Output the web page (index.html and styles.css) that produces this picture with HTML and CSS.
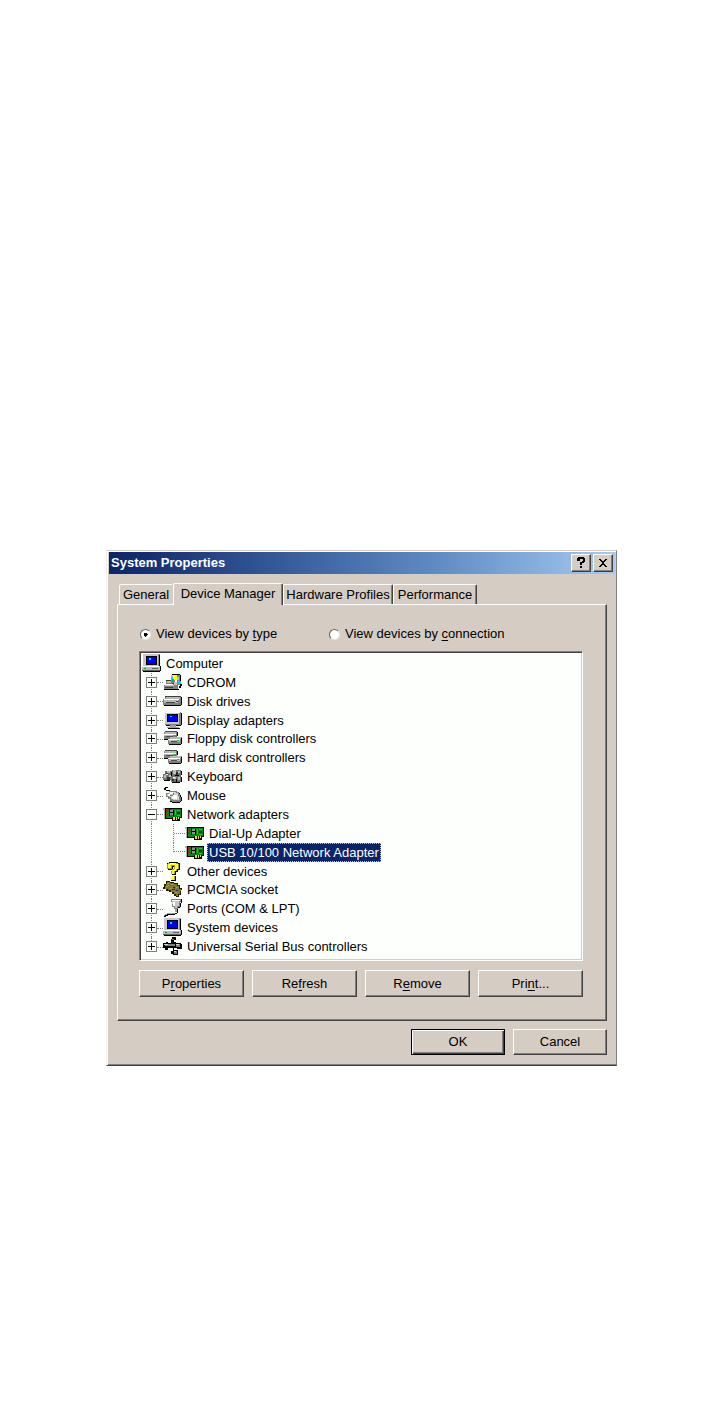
FILE: index.html
```html
<!DOCTYPE html>
<html lang="en">
<head>
    <meta charset="UTF-8">
    <meta name="viewport" content="width=device-width, initial-scale=1.0">
    <title>System Properties</title>
    <link rel="stylesheet" href="styles.css">
</head>
<body>
    <!-- icon set, one symbol per device class -->
    <svg class="sprites" aria-hidden="true">
        <symbol id="computer" viewBox="0 0 20 19">
            <path fill="#909090" d="M1 0h17v13H1z"/>
            <path fill="#c8c8c8" d="M1 0h15v12H1z"/>
            <path fill="#000" d="M17 1h1v12h-1zM4 2h11v9H4z"/>
            <path fill="#0000f0" d="M5 3h9v7H5z"/>
            <path fill="#00e0ff" d="M7 4h2v2H7z"/>
            <path fill="#b8b8b8" d="M0 12h18v5H0z"/>
            <path fill="#fff" d="M0 12h17v1H0z"/>
            <path fill="#00b000" d="M2 14h2v1H2z"/>
            <path fill="#606060" d="M10 14h6v1h-6zM0 16h18v1H0z"/>
            <path fill="#000" d="M18 12h1v5h-1zM1 17h17v1H1z"/>
        </symbol>
        <symbol id="cdrom" viewBox="0 0 20 19">
            <path fill="#808080" d="M8 2h9v10H8zM3 8h5v3H3zM1 11h14v5H1z"/>
            <path fill="#c0c0c0" d="M8 2h3v3H8zM4 8h4v2H4zM13 4h3v3h-3z"/>
            <path fill="#ffff00" d="M10 2h4v5h-4z"/>
            <path fill="#00d8e0" d="M15 8h3v3h-3zM8 4h2v3H8z"/>
            <path fill="#00c040" d="M9 6h2v3H9z"/>
            <path fill="#fff" d="M12 7h2v2h-2zM1 11h9v1H1z"/>
            <path fill="#c8c8c8" d="M11 9h3v3h-3zM2 12h9v1H2z"/>
            <path fill="#404040" d="M2 14h8v1H2zM9 10h2v1H9zM3 7h5v1H3z"/>
            <path fill="#000" d="M1 16h15v1H1zM16 13h2v2h-2zM17 2h1v6h-1zM17 11h2v2h-2zM9 1h8v1H9z"/>
        </symbol>
        <symbol id="disk" viewBox="0 0 20 19">
            <path fill="#808080" d="M2 5h16v2H2zM0 7h18v6H0z"/>
            <path fill="#b8b8b8" d="M3 5h14v2H3zM1 8h14v3H1z"/>
            <path fill="#fff" d="M1 7h15v1H1z"/>
            <path fill="#404040" d="M3 10h9v1H3zM2 4h16v1H2z"/>
            <path fill="#f00000" d="M13 9h2v1h-2z"/>
            <path fill="#000" d="M18 5h1v8h-1zM1 13h17v1H1z"/>
        </symbol>
        <symbol id="display" viewBox="0 0 20 19">
            <path fill="#808080" d="M2 1h16v13H2z"/>
            <path fill="#c8c8c8" d="M2 1h14v12H2z"/>
            <path fill="#000" d="M18 2h1v12h-1zM4 3h11v8H4zM3 14h15v1H3z"/>
            <path fill="#0000f0" d="M5 4h9v6H5z"/>
            <path fill="#00e0ff" d="M7 5h2v1H7z"/>
            <path fill="#fff" d="M2 1h15v1H2z"/>
            <path fill="#a0a0a0" d="M7 14h6v2H7zM4 16h12v1H4z"/>
            <path fill="#000" d="M5 17h12v1H5z"/>
        </symbol>
        <symbol id="drives" viewBox="0 0 20 19">
            <path fill="#808080" d="M1 3h13v7H1zM5 8h14v7H5z"/>
            <path fill="#b8b8b8" d="M2 3h11v2H2zM1 6h11v1H1zM7 8h11v2H7zM6 11h11v2H6z"/>
            <path fill="#fff" d="M1 5h12v1H1zM5 10h12v1H5z"/>
            <path fill="#505050" d="M3 7h7v1H3zM8 12h6v1H8zM2 2h12v1H2z"/>
            <path fill="#00d000" d="M10 6h2v1h-2zM14 11h2v1h-2z"/>
            <path fill="#000" d="M14 3h1v4h-1zM18 9h1v6h-1zM6 15h12v1H6zM1 10h4v1H1z"/>
        </symbol>
        <symbol id="keyboard" viewBox="0 0 20 19">
            <path fill="#707070" d="M2 4h7v4H2zM0 7h9v6H0zM9 3h9v6H9zM8 9h10v6H8z"/>
            <path fill="#c0c0c0" d="M4 4h3v2H4zM1 8h2v3H1zM6 8h2v2H6zM10 3h3v4h-3zM15 4h2v2h-2zM10 10h3v2h-3zM15 10h2v3h-2z"/>
            <path fill="#fff" d="M10 2h5v1h-5zM3 7h2v1H3zM10 10h2v1h-2z"/>
            <path fill="#303030" d="M4 10h3v3H4zM13 5h2v3h-2zM9 12h2v2H9zM3 6h2v1H3z"/>
            <path fill="#000" d="M8 5h1v4H8zM18 4h1v4h-1zM12 8h4v1h-4zM1 13h6v1H1zM9 15h8v1H9zM18 10h1v5h-1zM13 12h1v3h-1z"/>
        </symbol>
        <symbol id="mouse" viewBox="0 0 20 19">
            <path fill="#000" d="M2 1h3v1H2zM1 2h2v2H1zM3 4h4v1H3zM16 7h1v2h-1zM17 9h1v2h-1zM18 11h1v4h-1zM17 15h1v1h-1zM9 16h8v1H9zM7 15h2v1H7z"/>
            <path fill="#808080" d="M6 5h8v1h2v2h1v3h1v4h-1v1H9v-1H7v-2H5v-2H3V7h3z"/>
            <path fill="#d0d0d0" d="M6 6h7v1h2v3h1v4h-6v-1H8v-2H6v-1H4V8h2z"/>
            <path fill="#fff" d="M7 6h3v2H7zM5 8h2v2H5zM9 9h5v4H9z"/>
            <path fill="#707070" d="M10 7h1v2h-1zM7 9h3v1H7z"/>
        </symbol>
        <symbol id="network" viewBox="0 0 20 19">
            <path fill="#000" d="M0 3h19v10h-2v3H9v-2H1V5H0z"/>
            <path fill="#b0b0b0" d="M0 3h2v2H0zM1 5h1v9H1z"/>
            <path fill="#008a10" d="M3 4h15v8H3zM3 12h6v1H3z"/>
            <path fill="#f00000" d="M3 5h2v2H3zM3 9h2v1H3z"/>
            <path fill="#000" d="M6 4h1v7H6zM10 5h1v6h-1zM7 7h3v1H7z"/>
            <path fill="#909090" d="M7 5h3v2H7zM7 8h3v2H7z"/>
            <path fill="#303030" d="M14 7h3v2h-3z"/>
            <path fill="#20c830" d="M12 5h1v5h-1zM14 5h3v1h-3zM14 10h3v1h-3z"/>
            <path fill="#f0e000" d="M10 12h2v3h-2zM13 12h1v3h-1zM15 12h1v2h-1z"/>
        </symbol>
        <symbol id="unknown" viewBox="0 0 20 19">
            <path fill="#000" d="M6 0h9v1h2v7h-2v2h-2v3H9V9h2V7h1V5h-2v3H5V6H4V1h2zM8 14h5v5H8z"/>
            <path fill="#b0a000" d="M4 2h1V1h10v1h1v5h-2v2h-2v3H8V9h1V7h2V4H9v3H4zM8 14h4v4H8z"/>
            <path fill="#ffff30" d="M5 2h2V1h6v1h2v5h-2v2h-2v3H9V8h2V7h1V3H8v3H5zM8 14h3v4H8z"/>
            <path fill="#fff" d="M7 1h4v1H7zM8 14h1v1H8z"/>
        </symbol>
        <symbol id="pcmcia" viewBox="0 0 20 19">
            <path fill="#202000" d="M3 1h4v1h4v1h4v2h2v3h2v2h-1v5h-2v2h-3v-1h-2v-2H9v-2H6v-1H3V9H0V7h1V4h2z"/>
            <path fill="#807830" d="M4 2h3v1h4v1h3v2h2v3h2v2h-1v3h-2v2h-2v-2h-2v-2H8v-2H5V9H2V6h1V4h1z"/>
            <path fill="#a89c50" d="M4 3h2v1H4zM8 4h2v1H8zM3 6h2v1H3zM7 8h2v1H7zM13 7h2v1h-2zM12 12h2v1h-2zM5 5h1v1H5z"/>
            <path fill="#2020a0" d="M10 7h2v1h-2zM9 9h3v1H9zM13 10h2v1h-2z"/>
        </symbol>
        <symbol id="ports" viewBox="0 0 20 19">
            <path fill="#808080" d="M8 0h10v3h-1v5h-2v2h-4V8H9V3H8z"/>
            <path fill="#c8c8c8" d="M9 2h7v5h-2v2h-2V7h-2z"/>
            <path fill="#fff" d="M9 1h8v1H9zM10 3h2v4h-2z"/>
            <path fill="#000" d="M18 0h1v4h-1zM17 4h1v4h-1zM15 8h2v1h-2zM14 10h1v4h-1zM12 14h2v1h-2zM4 15h8v1H4zM2 16h3v1H2zM1 17h2v1H1z"/>
            <path fill="#a0a0a0" d="M12 10h2v3h-2zM4 14h8v1H4zM2 15h2v1H2zM1 16h1v1H1z"/>
        </symbol>
        <symbol id="usb" viewBox="0 0 20 19">
            <path fill="#000" d="M9 0h4v3h-2v2h2v1h5v1h1v5h-5v-1h-3v2h4v5h-5v-1H8v-3h2v-3H5v2H2v-2H0V6h3V5h2v1h3V2h1z"/>
            <path fill="#808080" d="M2 7h10v2H2zM13 7h4v3h-4zM9 2h2v1H9zM11 14h3v3h-3z"/>
            <path fill="#d0d0d0" d="M1 7h4v1H1zM13 7h3v1h-3zM11 14h2v1h-2z"/>
        </symbol>
    </svg>

    <main class="window">
        <header class="titlebar">
            <h1>System Properties</h1>
            <button class="caption" aria-label="Help">
                <svg viewBox="0 0 12 12"><path d="M2 1h1V0h6v1h1v4H9v1H7v2H5V5h2V4h1V2H5v2H2zM5 9h2v2H5z"/></svg>
            </button>
            <button class="caption" aria-label="Close">
                <svg viewBox="0 0 12 12"><path d="M2 2h2v1h1v1h2V3h1V2h2v1H9v1H8v1H7v2h1v1h1v1h1v1H8V9H7V8H5v1H4v1H2V9h1V8h1V7h1V5H4V4H3V3H2z"/></svg>
            </button>
        </header>

        <div class="tabs" role="tablist">
            <button class="tab" role="tab">General</button>
            <button class="tab active" role="tab" aria-selected="true">Device Manager</button>
            <button class="tab" role="tab">Hardware Profiles</button>
            <button class="tab" role="tab">Performance</button>
        </div>

        <section class="panel" role="tabpanel">
            <div class="views">
                <label><input type="radio" name="view" checked><span>View devices by <u>t</u>ype</span></label>
                <label><input type="radio" name="view"><span>View devices by <u>c</u>onnection</span></label>
            </div>

            <ul class="tree">
                <li class="root"><svg class="icon"><use href="#computer"/></svg><span class="name">Computer</span></li>
                <li><button class="expand" aria-label="Expand"></button><svg class="icon"><use href="#cdrom"/></svg><span class="name">CDROM</span></li>
                <li><button class="expand" aria-label="Expand"></button><svg class="icon"><use href="#disk"/></svg><span class="name">Disk drives</span></li>
                <li><button class="expand" aria-label="Expand"></button><svg class="icon"><use href="#display"/></svg><span class="name">Display adapters</span></li>
                <li><button class="expand" aria-label="Expand"></button><svg class="icon"><use href="#drives"/></svg><span class="name">Floppy disk controllers</span></li>
                <li><button class="expand" aria-label="Expand"></button><svg class="icon"><use href="#drives"/></svg><span class="name">Hard disk controllers</span></li>
                <li><button class="expand" aria-label="Expand"></button><svg class="icon"><use href="#keyboard"/></svg><span class="name">Keyboard</span></li>
                <li><button class="expand" aria-label="Expand"></button><svg class="icon"><use href="#mouse"/></svg><span class="name">Mouse</span></li>
                <li><button class="expand open" aria-label="Collapse"></button><svg class="icon"><use href="#network"/></svg><span class="name">Network adapters</span></li>
                <li class="child"><svg class="icon"><use href="#network"/></svg><span class="name">Dial-Up Adapter</span></li>
                <li class="child end"><svg class="icon"><use href="#network"/></svg><span class="name selected">USB 10/100 Network Adapter</span></li>
                <li><button class="expand" aria-label="Expand"></button><svg class="icon"><use href="#unknown"/></svg><span class="name">Other devices</span></li>
                <li><button class="expand" aria-label="Expand"></button><svg class="icon"><use href="#pcmcia"/></svg><span class="name">PCMCIA socket</span></li>
                <li><button class="expand" aria-label="Expand"></button><svg class="icon"><use href="#ports"/></svg><span class="name">Ports (COM &amp; LPT)</span></li>
                <li><button class="expand" aria-label="Expand"></button><svg class="icon"><use href="#computer"/></svg><span class="name">System devices</span></li>
                <li><button class="expand" aria-label="Expand"></button><svg class="icon"><use href="#usb"/></svg><span class="name">Universal Serial Bus controllers</span></li>
            </ul>

            <div class="actions">
                <button class="button">P<u>r</u>operties</button>
                <button class="button">Re<u>f</u>resh</button>
                <button class="button">R<u>e</u>move</button>
                <button class="button">Pri<u>n</u>t...</button>
            </div>
        </section>

        <footer class="footer">
            <button class="button default">OK</button>
            <button class="button">Cancel</button>
        </footer>
    </main>
</body>
</html>
```
FILE: styles.css
```css
* {
    box-sizing: border-box;
}

body {
    margin: 0;
    padding: 550px 106px 338px;
    background-color: #fff;
    color: #000;
    font-family: "Liberation Sans", Arial, sans-serif;
    font-size: 13px;
    line-height: 16px;
}

button {
    font: inherit;
    color: inherit;
    margin: 0;
    padding: 0;
}

u {
    text-underline-offset: 2px;
}

.sprites {
    display: none;
}

.window {
    padding: 1px 1px 10px 2px;
    background-color: #d5cdc4;
    border: 1px solid;
    border-color: #d5cdc4 #808080 #404040 #f0eeea;
    box-shadow: inset 1px 1px #fff, inset 0 -1px #808080;
}

.titlebar {
    display: flex;
    align-items: center;
    gap: 2px;
    height: 22px;
    padding: 0 2px;
    background: linear-gradient(to right, #0a246a, #5f8cc4 65%, #a6caf0);
}

.titlebar h1 {
    flex: 1;
    margin: 0;
    color: #fff;
    font-size: 13px;
    font-weight: bold;
}

.caption {
    display: grid;
    place-items: center;
    width: 20px;
    height: 18px;
    background-color: #d5cdc4;
    border: 1px solid;
    border-color: #fff #404040 #404040 #fff;
    box-shadow: inset -1px -1px #808080;
}

.caption svg {
    width: 12px;
    height: 12px;
    shape-rendering: crispEdges;
}

.tabs {
    display: grid;
    grid-template-columns: 54px 110px 110px 84px;
    align-items: end;
    margin: 9px 0 0 10px;
}

.tab {
    height: 20px;
    background-color: #d5cdc4;
    border: 1px solid;
    border-color: #fff #404040 transparent #fff;
    border-bottom: 0;
    border-radius: 2px 2px 0 0;
    box-shadow: inset -1px 0 #808080;
    white-space: nowrap;
}

.tab.active {
    position: relative;
    height: 22px;
    margin-bottom: -1px;
    padding-bottom: 2px;
}

.tab:first-child {
    border-right-color: transparent;
    box-shadow: none;
}

.panel {
    margin: 0 8px;
    padding: 21px 23px 23px 21px;
    border: 1px solid;
    border-color: #fff #404040 #404040 #fff;
    box-shadow: inset -1px -1px #808080;
}

.views {
    display: grid;
    grid-template-columns: 189px auto;
    padding-left: 1px;
}

.views label {
    display: flex;
    align-items: center;
    gap: 5px;
}

.views input {
    appearance: none;
    width: 11px;
    height: 11px;
    margin: 0;
    background-color: #fff;
    border: 1px solid;
    border-color: #606060 #e8e4de #e8e4de #606060;
    border-radius: 50%;
}

.views input:checked {
    background-image: radial-gradient(circle, #000 2px, transparent 2px);
}

.tree {
    display: grid;
    grid-auto-rows: minmax(0, 1fr);
    height: 310px;
    margin: 9px 0;
    padding: 2px 1px 4px;
    list-style: none;
    background-color: #fdfffc;
    border: 1px solid;
    border-color: #808080 #fff #fff #808080;
    box-shadow: inset 1px 1px #404040, inset -1px -1px #d5cdc4;
}

.tree li {
    position: relative;
    display: flex;
    align-items: center;
    padding-left: 5px;
}

.tree .root {
    padding-left: 1px;
}

.tree .child {
    padding-left: 44px;
}

/* dotted guide lines */
.tree li:not(.root)::before {
    content: "";
    position: absolute;
    top: 0;
    bottom: 0;
    left: 10px;
    border-left: 1px dotted #808080;
}

.tree li:last-child::before {
    bottom: 50%;
}

.tree li:not(.root)::after {
    content: "";
    position: absolute;
    top: 50%;
    left: 16px;
    width: 6px;
    border-top: 1px dotted #808080;
}

.tree li.child:not(.root)::after {
    top: 0;
    bottom: 0;
    left: 32px;
    width: 12px;
    border-left: 1px dotted #808080;
    border-top: 0;
    background: repeating-linear-gradient(to right, #808080 0 1px, transparent 1px 2px) 0 50% / 12px 1px no-repeat;
}

.tree li.end:not(.root)::after {
    bottom: 50%;
    background-position: 0 100%;
}

.expand {
    position: relative;
    z-index: 1;
    flex: none;
    width: 11px;
    height: 11px;
    margin-right: 6px;
    border: 1px solid #808080;
    background: linear-gradient(#000, #000) center / 7px 1px no-repeat,
                linear-gradient(#000, #000) center / 1px 7px no-repeat #fdfffc;
}

.expand.open {
    background: linear-gradient(#000, #000) center / 7px 1px no-repeat #fdfffc;
}

.icon {
    flex: none;
    width: 20px;
    height: 19px;
    shape-rendering: crispEdges;
}

.name {
    margin-left: 2px;
    padding: 0 2px;
    line-height: 19px;
    white-space: nowrap;
}

.name.selected {
    color: #fff;
    background-color: #0a246a;
    outline: 1px dotted #f0c060;
    outline-offset: -1px;
}

.actions {
    display: grid;
    grid-template-columns: repeat(4, 1fr);
    gap: 8px;
}

.button {
    height: 27px;
    background-color: #d5cdc4;
    border: 1px solid;
    border-color: #fff #404040 #404040 #fff;
    box-shadow: inset -1px -1px #808080;
}

.footer {
    display: flex;
    justify-content: flex-end;
    gap: 8px;
    margin: 8px 8px 0;
}

.footer .button {
    width: 94px;
    height: 26px;
}

.button.default {
    border-color: #000;
    box-shadow: inset 1px 1px #fff, inset -1px -1px #404040, inset -2px -2px #808080;
}
```
